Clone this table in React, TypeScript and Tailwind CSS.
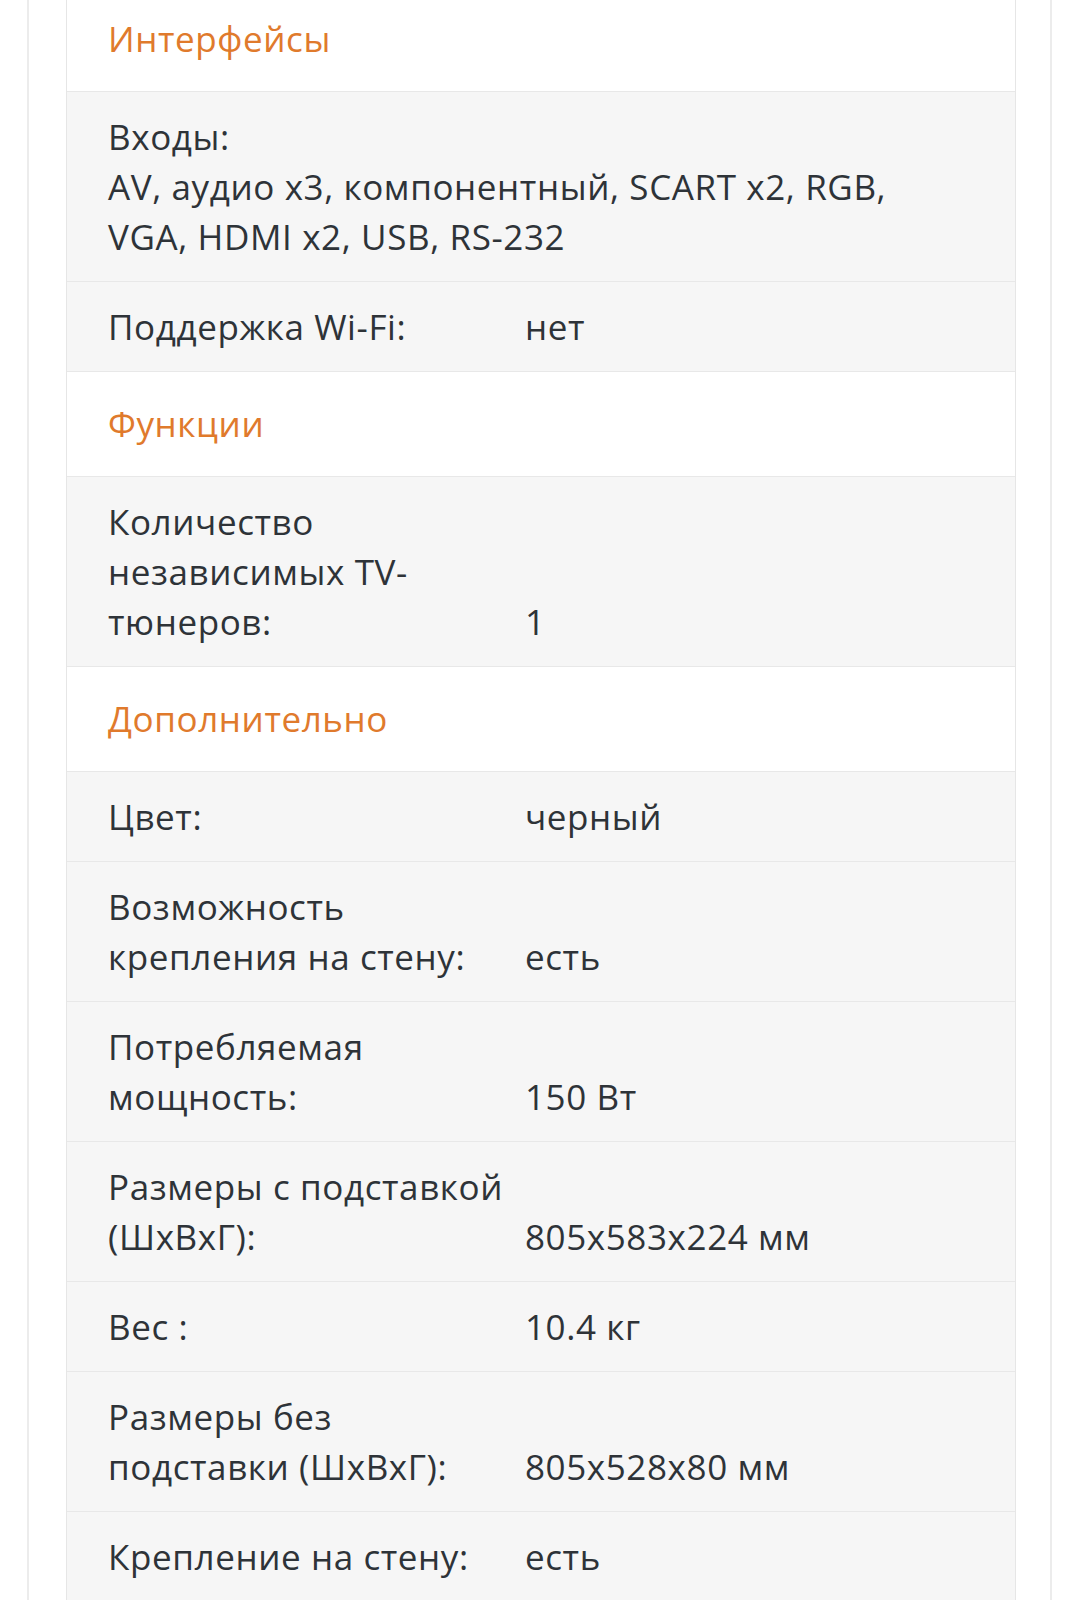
const groups: { title: string; rows: { label: string; value?: string; full?: string }[] }[] = [
  {
    title: "Интерфейсы",
    rows: [
      { label: "Входы:", full: "AV, аудио x3, компонентный, SCART x2, RGB, VGA, HDMI x2, USB, RS-232" },
      { label: "Поддержка Wi-Fi:", value: "нет" },
    ],
  },
  {
    title: "Функции",
    rows: [{ label: "Количество независимых TV-тюнеров:", value: "1" }],
  },
  {
    title: "Дополнительно",
    rows: [
      { label: "Цвет:", value: "черный" },
      { label: "Возможность крепления на стену:", value: "есть" },
      { label: "Потребляемая мощность:", value: "150 Вт" },
      { label: "Размеры с подставкой (ШхВхГ):", value: "805x583x224 мм" },
      { label: "Вес :", value: "10.4 кг" },
      { label: "Размеры без подставки (ШхВхГ):", value: "805x528x80 мм" },
      { label: "Крепление на стену:", value: "есть" },
    ],
  },
];

export default function App() {
  return (
    <div
      className="h-[1600px] overflow-hidden bg-white text-[35px] font-medium leading-[50px] tracking-[0.6px] text-[#2e3338]"
      style={{ fontFamily: '"Open Sans", "Noto Sans", sans-serif' }}
    >
      <div className="ml-[27px] h-[1700px] w-[1025px] border-x-2 border-[#ececec]">
        <div className="-mt-[13px] ml-[37px] w-[950px] border-x border-[#e6e6e6]">
          {groups.map((g) => (
            <div key={g.title}>
              {/* section header */}
              <div className="border-b border-[#e8e8e8] bg-white px-[41px] py-[27px] text-[#e07a2c]">
                {g.title}
              </div>
              {g.rows.map((r) =>
                r.full ? (
                  <div key={r.label} className="border-b border-[#e8e8e8] bg-[#f6f6f6] px-[41px] pt-[20px] pb-[19px]">
                    <div>{r.label}</div>
                    <div className="pr-[60px]">{r.full}</div>
                  </div>
                ) : (
                  <div key={r.label} className="flex items-end border-b border-[#e8e8e8] bg-[#f6f6f6] pt-[20px] pb-[19px]">
                    <div className="w-[458px] shrink-0 pl-[41px] pr-[14px]">{r.label}</div>
                    <div className="flex-1 pr-[41px]">{r.value}</div>
                  </div>
                ),
              )}
            </div>
          ))}
        </div>
      </div>
    </div>
  );
}
